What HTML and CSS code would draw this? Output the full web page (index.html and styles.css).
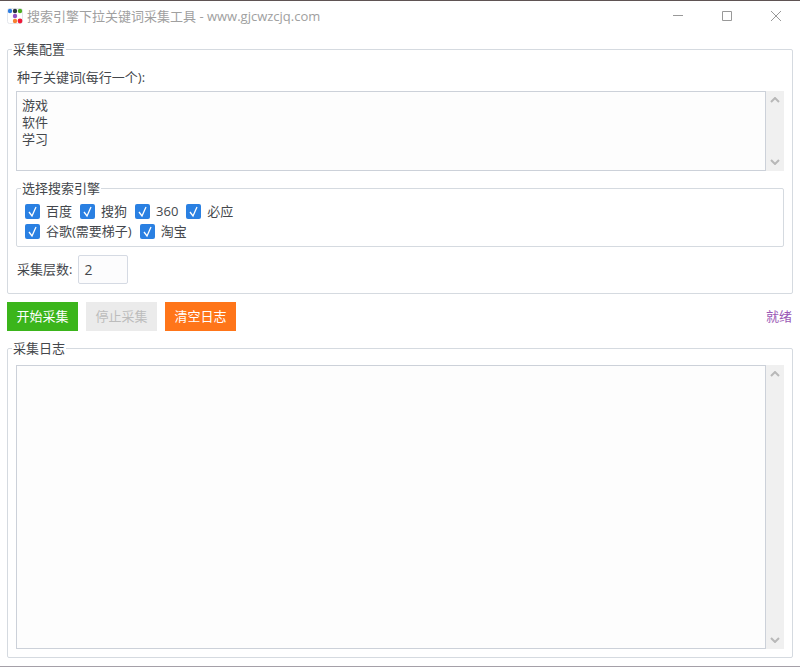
FILE: index.html
```html
<!DOCTYPE html>
<html lang="zh-CN">
<head>
    <meta charset="UTF-8">
    <meta name="viewport" content="width=device-width, initial-scale=1.0">
    <title>搜索引擎下拉关键词采集工具</title>
    <link rel="stylesheet" href="styles.css">
</head>
<body>
    <header class="titlebar">
        <svg class="logo" width="16" height="16" viewBox="0 0 16 16" aria-hidden="true">
            <rect x="0.5" y="0.5" width="15" height="15" rx="2" fill="#fff" stroke="#e4e7ec"/>
            <circle cx="3" cy="3" r="2.2" fill="#2f7de0"/>
            <circle cx="8" cy="3" r="2.2" fill="#2c3440"/>
            <circle cx="13" cy="3" r="2.2" fill="#4fae22"/>
            <circle cx="8" cy="8" r="2.2" fill="#9450c4"/>
            <circle cx="8" cy="13" r="2.2" fill="#f88030"/>
            <circle cx="13" cy="13" r="2.4" fill="#f01838"/>
        </svg>
        <h1 class="title">搜索引擎下拉关键词采集工具 - www.gjcwzcjq.com</h1>
        <div class="window-buttons">
            <button class="window-button" type="button" aria-label="最小化">
                <svg width="12" height="12" viewBox="0 0 12 12"><path d="M1 5.5h10"/></svg>
            </button>
            <button class="window-button" type="button" aria-label="最大化">
                <svg width="12" height="12" viewBox="0 0 12 12"><path d="M1.5 1.5h9v9h-9z"/></svg>
            </button>
            <button class="window-button" type="button" aria-label="关闭">
                <svg width="12" height="12" viewBox="0 0 12 12"><path d="M1 1l10 10M11 1L1 11"/></svg>
            </button>
        </div>
    </header>

    <main class="content">
        <fieldset class="group">
            <legend>采集配置</legend>
            <label class="label" for="keywords">种子关键词(每行一个):</label>
            <div class="text-area keywords">
                <textarea id="keywords" class="text-box">游戏
软件
学习</textarea>
                <div class="scrollbar">
                    <button class="scroll-button" type="button" aria-label="向上滚动">
                        <svg width="10" height="6" viewBox="0 0 10 6"><path d="M1 5l4-4 4 4"/></svg>
                    </button>
                    <button class="scroll-button" type="button" aria-label="向下滚动">
                        <svg width="10" height="6" viewBox="0 0 10 6"><path d="M1 1l4 4 4-4"/></svg>
                    </button>
                </div>
            </div>

            <fieldset class="group engines">
                <legend>选择搜索引擎</legend>
                <div class="engine-row">
                    <label class="check"><input type="checkbox" checked>百度</label>
                    <label class="check"><input type="checkbox" checked>搜狗</label>
                    <label class="check"><input type="checkbox" checked>360</label>
                    <label class="check"><input type="checkbox" checked>必应</label>
                </div>
                <div class="engine-row">
                    <label class="check"><input type="checkbox" checked>谷歌(需要梯子)</label>
                    <label class="check"><input type="checkbox" checked>淘宝</label>
                </div>
            </fieldset>

            <div class="depth">
                <label for="depth">采集层数:</label>
                <input id="depth" class="depth-input" type="text" value="2">
            </div>
        </fieldset>

        <div class="toolbar">
            <button class="button start" type="button">开始采集</button>
            <button class="button stop" type="button" disabled>停止采集</button>
            <button class="button clear" type="button">清空日志</button>
            <span class="status">就绪</span>
        </div>

        <fieldset class="group log">
            <legend>采集日志</legend>
            <div class="text-area log-area">
                <textarea class="text-box" aria-label="采集日志" readonly></textarea>
                <div class="scrollbar">
                    <button class="scroll-button" type="button" aria-label="向上滚动">
                        <svg width="10" height="6" viewBox="0 0 10 6"><path d="M1 5l4-4 4 4"/></svg>
                    </button>
                    <button class="scroll-button" type="button" aria-label="向下滚动">
                        <svg width="10" height="6" viewBox="0 0 10 6"><path d="M1 1l4 4 4-4"/></svg>
                    </button>
                </div>
            </div>
        </fieldset>
    </main>
</body>
</html>
```
FILE: styles.css
```css
* {
    box-sizing: border-box;
}

body {
    font-family: "Open Sans", "Noto Sans CJK SC", sans-serif;
    font-size: 13px;
    line-height: 17px;
    color: #44474c;
    background-color: #ffffff;
    margin: 0;
    min-height: 100vh;
    display: flex;
    flex-direction: column;
    border-top: 1px solid #5f5353;
    border-bottom: 1px solid #a5a0a8;
}

button,
input,
textarea {
    font: inherit;
    color: inherit;
    margin: 0;
}

svg {
    display: block;
    fill: none;
}

/* title bar */
.titlebar {
    display: flex;
    align-items: center;
    height: 30px;
    padding-left: 7px;
    color: #a0a0a0;
}

.title {
    flex: 1;
    margin: 0 0 0 4px;
    font-size: 13px;
    font-weight: normal;
}

.window-buttons {
    display: flex;
}

.window-button {
    display: flex;
    align-items: center;
    justify-content: center;
    width: 49px;
    height: 30px;
    padding: 0;
    border: none;
    background: none;
}

.window-button svg {
    stroke: #999999;
}

/* groups */
.content {
    flex: 1;
    padding: 10px 7px 8px;
}

.group {
    min-width: 0;
    margin: 0;
    padding: 11px 8px 9px;
    border: 1px solid #d5dae0;
    border-radius: 2px;
}

.group legend {
    margin-left: -4px;
    padding: 0 1px;
}

.label {
    display: block;
    margin: 0 1px 5px;
}

.text-area {
    display: flex;
}

.keywords {
    height: 80px;
    margin-bottom: 9px;
}

.text-box {
    flex: 1;
    min-width: 0;
    padding: 5px;
    border: 1px solid #ccd1d9;
    border-radius: 0;
    outline: none;
    resize: none;
    overflow: hidden;
    background-color: #fdfdfd;
}

.scrollbar {
    display: flex;
    flex-direction: column;
    justify-content: space-between;
    width: 18px;
    background-color: #f0f0f0;
}

.scroll-button {
    display: flex;
    align-items: center;
    justify-content: center;
    height: 18px;
    padding: 0;
    border: none;
    background: none;
}

.scroll-button svg {
    stroke: #b8b8b8;
    stroke-width: 2;
}

/* search engines */
.engines {
    padding: 4px 8px 5px;
    margin-bottom: 8px;
}

.engine-row {
    display: flex;
    gap: 8px;
    height: 20px;
}

.check {
    display: flex;
    align-items: center;
    gap: 6px;
}

.check input {
    appearance: none;
    width: 15px;
    height: 15px;
    border-radius: 2px;
    background: #2a80e2 url("data:image/svg+xml,%3Csvg xmlns='http://www.w3.org/2000/svg' viewBox='0 0 15 15'%3E%3Cpath d='M4 8l3 4 4-9' fill='none' stroke='white' stroke-width='1.3'/%3E%3C/svg%3E") center no-repeat;
}

.depth {
    display: flex;
    align-items: center;
    gap: 6px;
    padding-left: 1px;
}

.depth-input {
    width: 50px;
    height: 29px;
    padding: 0 5px;
    border: 1px solid #d5dae3;
    border-radius: 2px;
    background-color: #fcfcfd;
    font-size: 14px;
}

/* buttons */
.toolbar {
    display: flex;
    align-items: center;
    gap: 8px;
    margin: 8px 0 9px;
}

.button {
    width: 71px;
    height: 29px;
    padding: 0;
    border: none;
    color: #ffffff;
}

.start {
    background-color: #3bb51b;
}

.stop {
    background-color: #ebebeb;
    color: #bcbcbc;
}

.clear {
    background-color: #ff7519;
}

.status {
    margin-left: auto;
    padding-right: 1px;
    color: #9b59b6;
}

/* log, fills what is left of the window */
.log {
    padding: 8px;
}

.log-area {
    height: calc(100vh - 383px);
    min-height: 80px;
}
```
